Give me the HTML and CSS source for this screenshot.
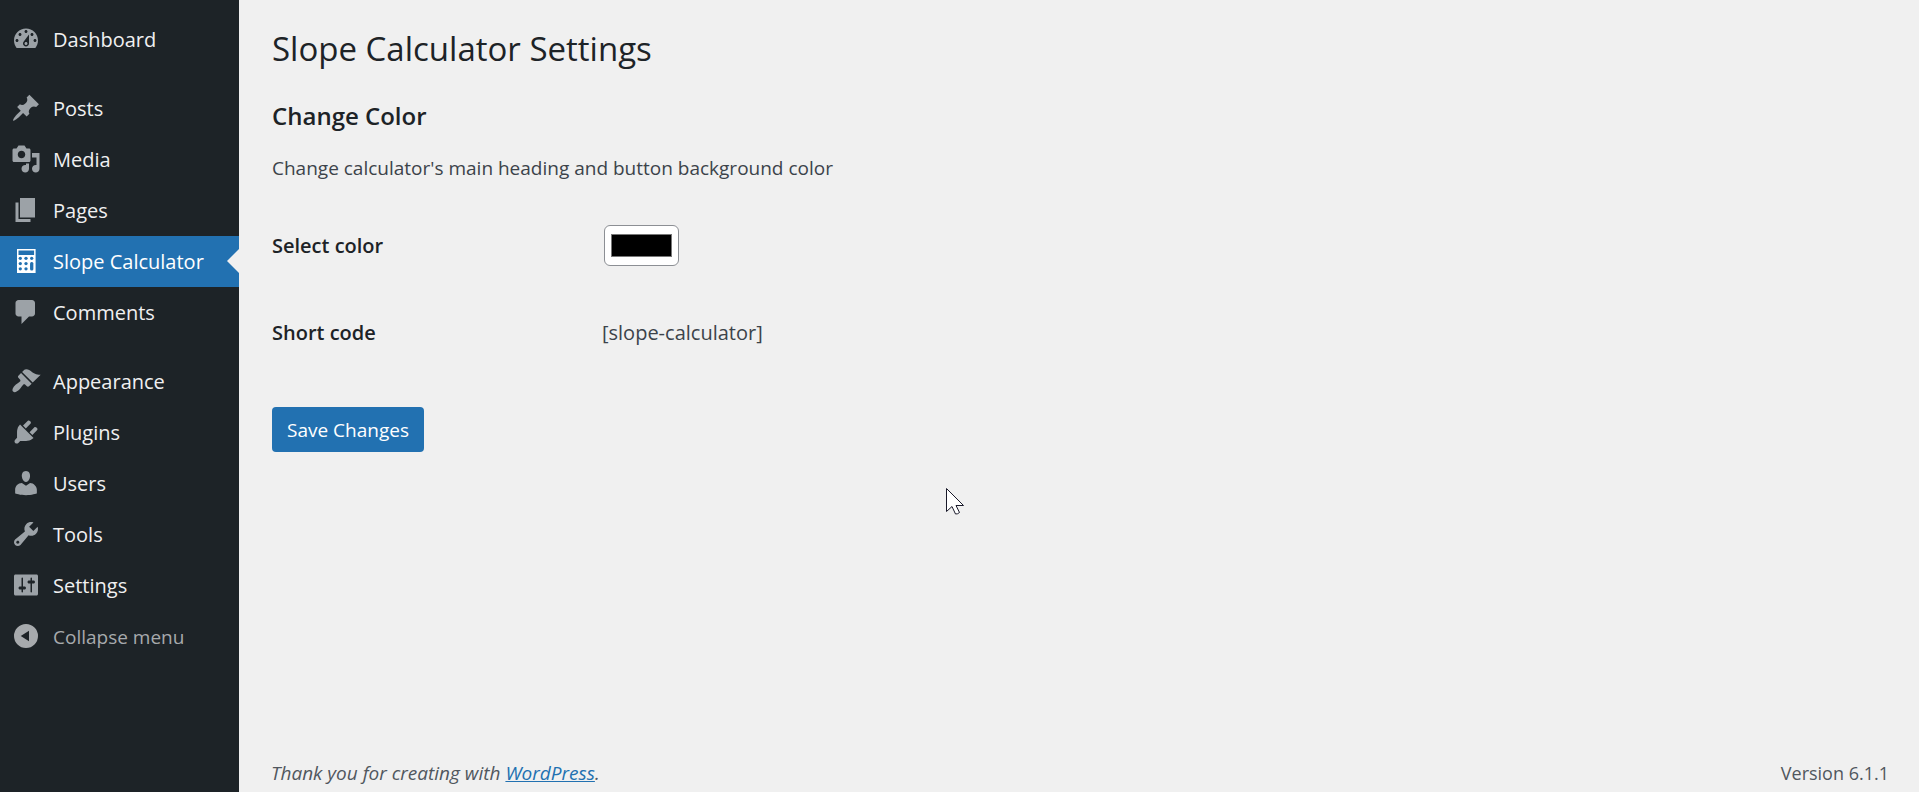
FILE: index.html
```html
<!DOCTYPE html>
<html lang="en">
<head>
<meta charset="utf-8">
<title>Slope Calculator Settings</title>
<link rel="stylesheet" href="styles.css">
</head>
<body>
<div class="admin">
  <nav class="menu" aria-label="Main menu">
    <ul class="menu-group">
      <li><a class="menu-item" href="#"><svg class="icon" viewBox="0 0 20 20"><path d="M3.76 16h12.48c1.1-1.37 1.76-3.11 1.76-5 0-4.42-3.58-8-8-8s-8 3.58-8 8c0 1.89.66 3.63 1.76 5zM10 4c.55 0 1 .45 1 1s-.45 1-1 1-1-.45-1-1 .45-1 1-1zM6 6c.55 0 1 .45 1 1s-.45 1-1 1-1-.45-1-1 .45-1 1-1zm8 0c.55 0 1 .45 1 1s-.45 1-1 1-1-.45-1-1 .45-1 1-1zm-5.37 5.55L12 7v6c0 1.1-.9 2-2 2s-2-.9-2-2c0-.57.24-1.08.63-1.45zM4 10c.55 0 1 .45 1 1s-.45 1-1 1-1-.45-1-1 .45-1 1-1zm12 0c.55 0 1 .45 1 1s-.45 1-1 1-1-.45-1-1 .45-1 1-1zm-5 3c0-.55-.45-1-1-1s-1 .45-1 1 .45 1 1 1 1-.45 1-1z"/></svg>Dashboard</a></li>
    </ul>
    <ul class="menu-group">
      <li><a class="menu-item" href="#"><svg class="icon" viewBox="0 0 20 20"><path d="M10.44 3.02l1.82-1.82 6.36 6.35-1.83 1.82c-1.05-.68-2.48-.57-3.41.36l-.75.75c-.92.93-1.04 2.35-.35 3.41l-1.83 1.82-2.41-2.41-2.8 2.79c-.42.42-3.38 2.71-3.8 2.29s1.86-3.39 2.28-3.81l2.79-2.79L4.1 9.36l1.83-1.82c1.05.69 2.48.57 3.4-.36l.75-.75c.93-.92 1.05-2.35.36-3.41z"/></svg>Posts</a></li>
      <li><a class="menu-item" href="#"><svg class="icon" viewBox="0 0 20 20"><path d="M13 11V4c0-.55-.45-1-1-1h-1.67L9 1H5L3.67 3H2c-.55 0-1 .45-1 1v7c0 .55.45 1 1 1h10c.55 0 1-.45 1-1zM7 4.5c1.38 0 2.5 1.12 2.5 2.5S8.38 9.5 7 9.5 4.5 8.38 4.5 7 5.62 4.5 7 4.5zM14 6h5v10.5c0 1.38-1.12 2.5-2.5 2.5S14 17.88 14 16.5s1.12-2.5 2.5-2.5c.17 0 .34.02.5.05V9h-3V6zm-4 8.05V13h2v3.5c0 1.38-1.12 2.5-2.5 2.5S7 17.88 7 16.5 8.12 14 9.5 14c.17 0 .34.02.5.05z"/></svg>Media</a></li>
      <li><a class="menu-item" href="#"><svg class="icon" viewBox="0 0 20 20"><path d="M6 15V2h10v13H6zm-1 1h8v2H3V5h2v11z"/></svg>Pages</a></li>
      <li><a class="menu-item current" href="#" aria-current="page"><svg class="icon" viewBox="0 0 20 20"><path fill-rule="evenodd" d="M4 2h12.400v16H4zM5 3v3h10.400V3z"/><g class="keys"><circle cx="6.200" cy="8.200" r="1.100"/><circle cx="10" cy="8.200" r="1.100"/><circle cx="13.800" cy="8.200" r="1.100"/><circle cx="6.200" cy="11.700" r="1.100"/><circle cx="10" cy="11.700" r="1.100"/><circle cx="6.200" cy="15.200" r="1.100"/><circle cx="10" cy="15.200" r="1.100"/><rect x="12.700" y="10.600" width="2.200" height="5.700" rx="1"/></g></svg>Slope Calculator</a></li>
      <li><a class="menu-item" href="#"><svg class="icon" viewBox="0 0 20 20"><path d="M5 2h9c1.1 0 2 .9 2 2v7c0 1.1-.9 2-2 2h-2l-5 5v-5H5c-1.1 0-2-.9-2-2V4c0-1.1.9-2 2-2z"/></svg>Comments</a></li>
    </ul>
    <ul class="menu-group">
      <li><a class="menu-item" href="#"><svg class="icon" viewBox="0 0 20 20"><path d="M14.48 11.06L7.41 3.99l1.5-1.5c.5-.56 2.3-.47 3.51.32 1.21.8 1.43 1.28 2.91 2.1 1.18.64 2.45 1.26 4.45.85zm-.71.71L6.7 4.7 4.93 6.47c-.39.39-.39 1.02 0 1.41l1.06 1.06c.39.39.39 1.03 0 1.42-.6.6-1.43 1.11-2.21 1.69-.35.26-.7.53-1.01.84C1.43 14.23.4 16.08 1.4 17.07c.99 1 2.84-.03 4.18-1.36.31-.31.58-.66.85-1.02.57-.78 1.08-1.61 1.69-2.21.39-.39 1.02-.39 1.41 0l1.06 1.06c.39.39 1.02.39 1.41 0z"/></svg>Appearance</a></li>
      <li><a class="menu-item" href="#"><svg class="icon" viewBox="0 0 20 20"><path d="M13.11 4.36L9.87 7.6 8 5.73l3.24-3.24c.35-.34 1.05-.2 1.56.32.52.51.66 1.21.31 1.55zm-8 1.77l.91-1.12 9.01 9.01-1.19.84c-.71.71-2.63 1.16-3.82 1.16H6.14L4.9 17.26c-.59.59-1.54.59-2.12 0-.59-.58-.59-1.53 0-2.12l1.24-1.24v-3.88c0-1.13.4-3.19 1.09-3.89zm7.26 3.97l3.24-3.24c.34-.35 1.04-.21 1.55.31.52.51.66 1.21.31 1.55l-3.24 3.25z"/></svg>Plugins</a></li>
      <li><a class="menu-item" href="#"><svg class="icon" viewBox="0 0 20 20"><path d="M10 9.25c-2.27 0-2.73-3.44-2.73-3.44C7 4.02 7.82 2 9.97 2c2.16 0 2.98 2.02 2.71 3.81 0 0-.41 3.44-2.68 3.44zm0 2.57L12.720 10c2.390 0 4.520 2.330 4.520 4.530v2.490s-3.650 1.130-7.240 1.130c-3.650 0-7.240-1.130-7.240-1.130v-2.490c0-2.250 1.940-4.480 4.470-4.480z"/></svg>Users</a></li>
      <li><a class="menu-item" href="#"><svg class="icon" viewBox="0 0 20 20"><path d="M16.68 9.77c-1.34 1.34-3.3 1.67-4.95.99l-5.41 6.52c-.99.99-2.59.99-3.58 0s-.99-2.59 0-3.57l6.52-5.42c-.68-1.65-.35-3.61.99-4.95 1.28-1.28 3.12-1.62 4.72-1.06l-2.89 2.89 2.82 2.82 2.86-2.87c.53 1.58.18 3.39-1.08 4.65zM3.81 16.21c.4.39 1.04.39 1.43 0 .4-.4.4-1.04 0-1.43-.39-.4-1.03-.4-1.43 0-.39.39-.39 1.03 0 1.43z"/></svg>Tools</a></li>
      <li><a class="menu-item" href="#"><svg class="icon" viewBox="0 0 20 20"><path d="M18 16V4c0-.55-.45-1-1-1H3c-.55 0-1 .45-1 1v12c0 .55.45 1 1 1h14c.55 0 1-.45 1-1zM8 11h1c.55 0 1 .45 1 1s-.45 1-1 1H8v1.500c0 .28-.22.5-.5.5s-.5-.22-.5-.5V13H6c-.55 0-1-.45-1-1s.45-1 1-1h1V5.500c0-.28.22-.5.5-.5s.5.22.5.5V11zm5-2h-1c-.55 0-1-.45-1-1s.45-1 1-1h1V5.500c0-.28.22-.5.5-.5s.5.22.5.5V7h1c.55 0 1 .45 1 1s-.45 1-1 1h-1v5.500c0 .28-.22.5-.5.5s-.5-.22-.5-.5V9z"/></svg>Settings</a></li>
      <li><button class="menu-item collapse" type="button"><svg class="icon" viewBox="0 0 20 20"><path fill-rule="evenodd" d="M10 2a8 8 0 1 0 0 16 8 8 0 0 0 0-16zM12 6.500v7L6.500 10z"/></svg>Collapse menu</button></li>
    </ul>
  </nav>
  <div class="content">
    <main>
      <h1 class="page-title">Slope Calculator Settings</h1>
      <h2 class="section-title">Change Color</h2>
      <p class="description">Change calculator's main heading and button background color</p>
      <form class="settings">
        <div class="row">
          <label class="row-label" for="color">Select color</label>
          <input class="color" id="color" type="color" value="#000000">
        </div>
        <div class="row">
          <span class="row-label">Short code</span>
          <span>[slope-calculator]</span>
        </div>
        <button class="save" type="button">Save Changes</button>
      </form>
    </main>
    <footer class="footer">
      <em>Thank you for creating with <a href="#">WordPress</a>.</em>
      <span class="version">Version 6.1.1</span>
    </footer>
  </div>
</div>
<svg class="pointer" viewBox="0 0 18 28" aria-hidden="true"><path d="M.5.500v23l5.500-5 3.500 7.500q2 .3 4-1.500L10 17.500h7.500z"/></svg>
</body>
</html>
```
FILE: styles.css
```css
* {
  box-sizing: border-box;
}

body {
  margin: 0;
  background: #f0f0f0;
  color: #3c434a;
  font-family: "Open Sans", "Noto Sans", sans-serif;
  font-size: 19px;
  line-height: 28px;
}

.admin {
  display: flex;
  min-height: 100vh;
}

/* Sidebar */
.menu {
  flex: none;
  width: 239px;
  padding-top: 14px;
  background: #1d2327;
}

.menu-group {
  margin: 0 0 18px;
  padding: 0;
  list-style: none;
}

.menu-item {
  position: relative;
  display: flex;
  align-items: center;
  gap: 12px;
  width: 100%;
  height: 51px;
  padding: 0 0 0 11px;
  border: 0;
  background: none;
  color: #f0f0f1;
  font: inherit;
  font-size: 20px;
  text-decoration: none;
  cursor: pointer;
}

.icon {
  flex: none;
  width: 30px;
  height: 30px;
  margin-bottom: 2px;
  fill: #9ca2a7;
}

.current {
  background: #2271b1;
  color: #fff;
}

.current .icon {
  fill: #fff;
}

.keys {
  fill: #2271b1;
}

.current::after {
  content: "";
  position: absolute;
  top: 13px;
  right: 0;
  border: 12px solid transparent;
  border-left-width: 0;
  border-right-color: #f0f0f0;
}

.collapse {
  color: #a7aaad;
  font-size: 19px;
}

.collapse .icon {
  fill: #a7aaad;
}

/* Page */
.content {
  display: flex;
  flex: 1;
  flex-direction: column;
  padding: 0 30px 0 32px;
}

main {
  padding-left: 1px;
}

.page-title {
  margin: 0;
  padding-top: 29px;
  color: #1d2327;
  font-size: 33px;
  font-weight: 400;
  line-height: 40px;
}

.section-title {
  margin: 31px 0 22px;
  color: #1d2327;
  font-size: 24px;
  font-weight: 600;
  line-height: 32px;
}

.description {
  margin: 0 0 20px;
}

.row {
  display: grid;
  grid-template-columns: 330px 1fr;
  align-items: center;
  min-height: 87px;
  font-size: 20px;
}

.row-label {
  color: #1d2327;
  font-weight: 600;
}

.color {
  width: 75px;
  height: 41px;
  margin: 0 2px;
  padding: 4px;
  border: 1px solid #8c8f94;
  border-radius: 6px;
  background: #fff;
}

.color::-webkit-color-swatch {
  border: 1px solid #777;
}

.save {
  height: 45px;
  margin-top: 31px;
  padding: 0 15px;
  border: 0;
  border-radius: 4px;
  background: #2271b1;
  color: #fff;
  font: inherit;
}

.footer {
  display: flex;
  justify-content: space-between;
  margin-top: auto;
  padding-bottom: 5px;
  color: #50575e;
}

.version {
  font-size: 18px;
}

.footer a {
  color: #2271b1;
}

.pointer {
  position: absolute;
  top: 488px;
  left: 946px;
  width: 18px;
  height: 28px;
  fill: #fff;
  stroke: #1a1a2a;
}
```
